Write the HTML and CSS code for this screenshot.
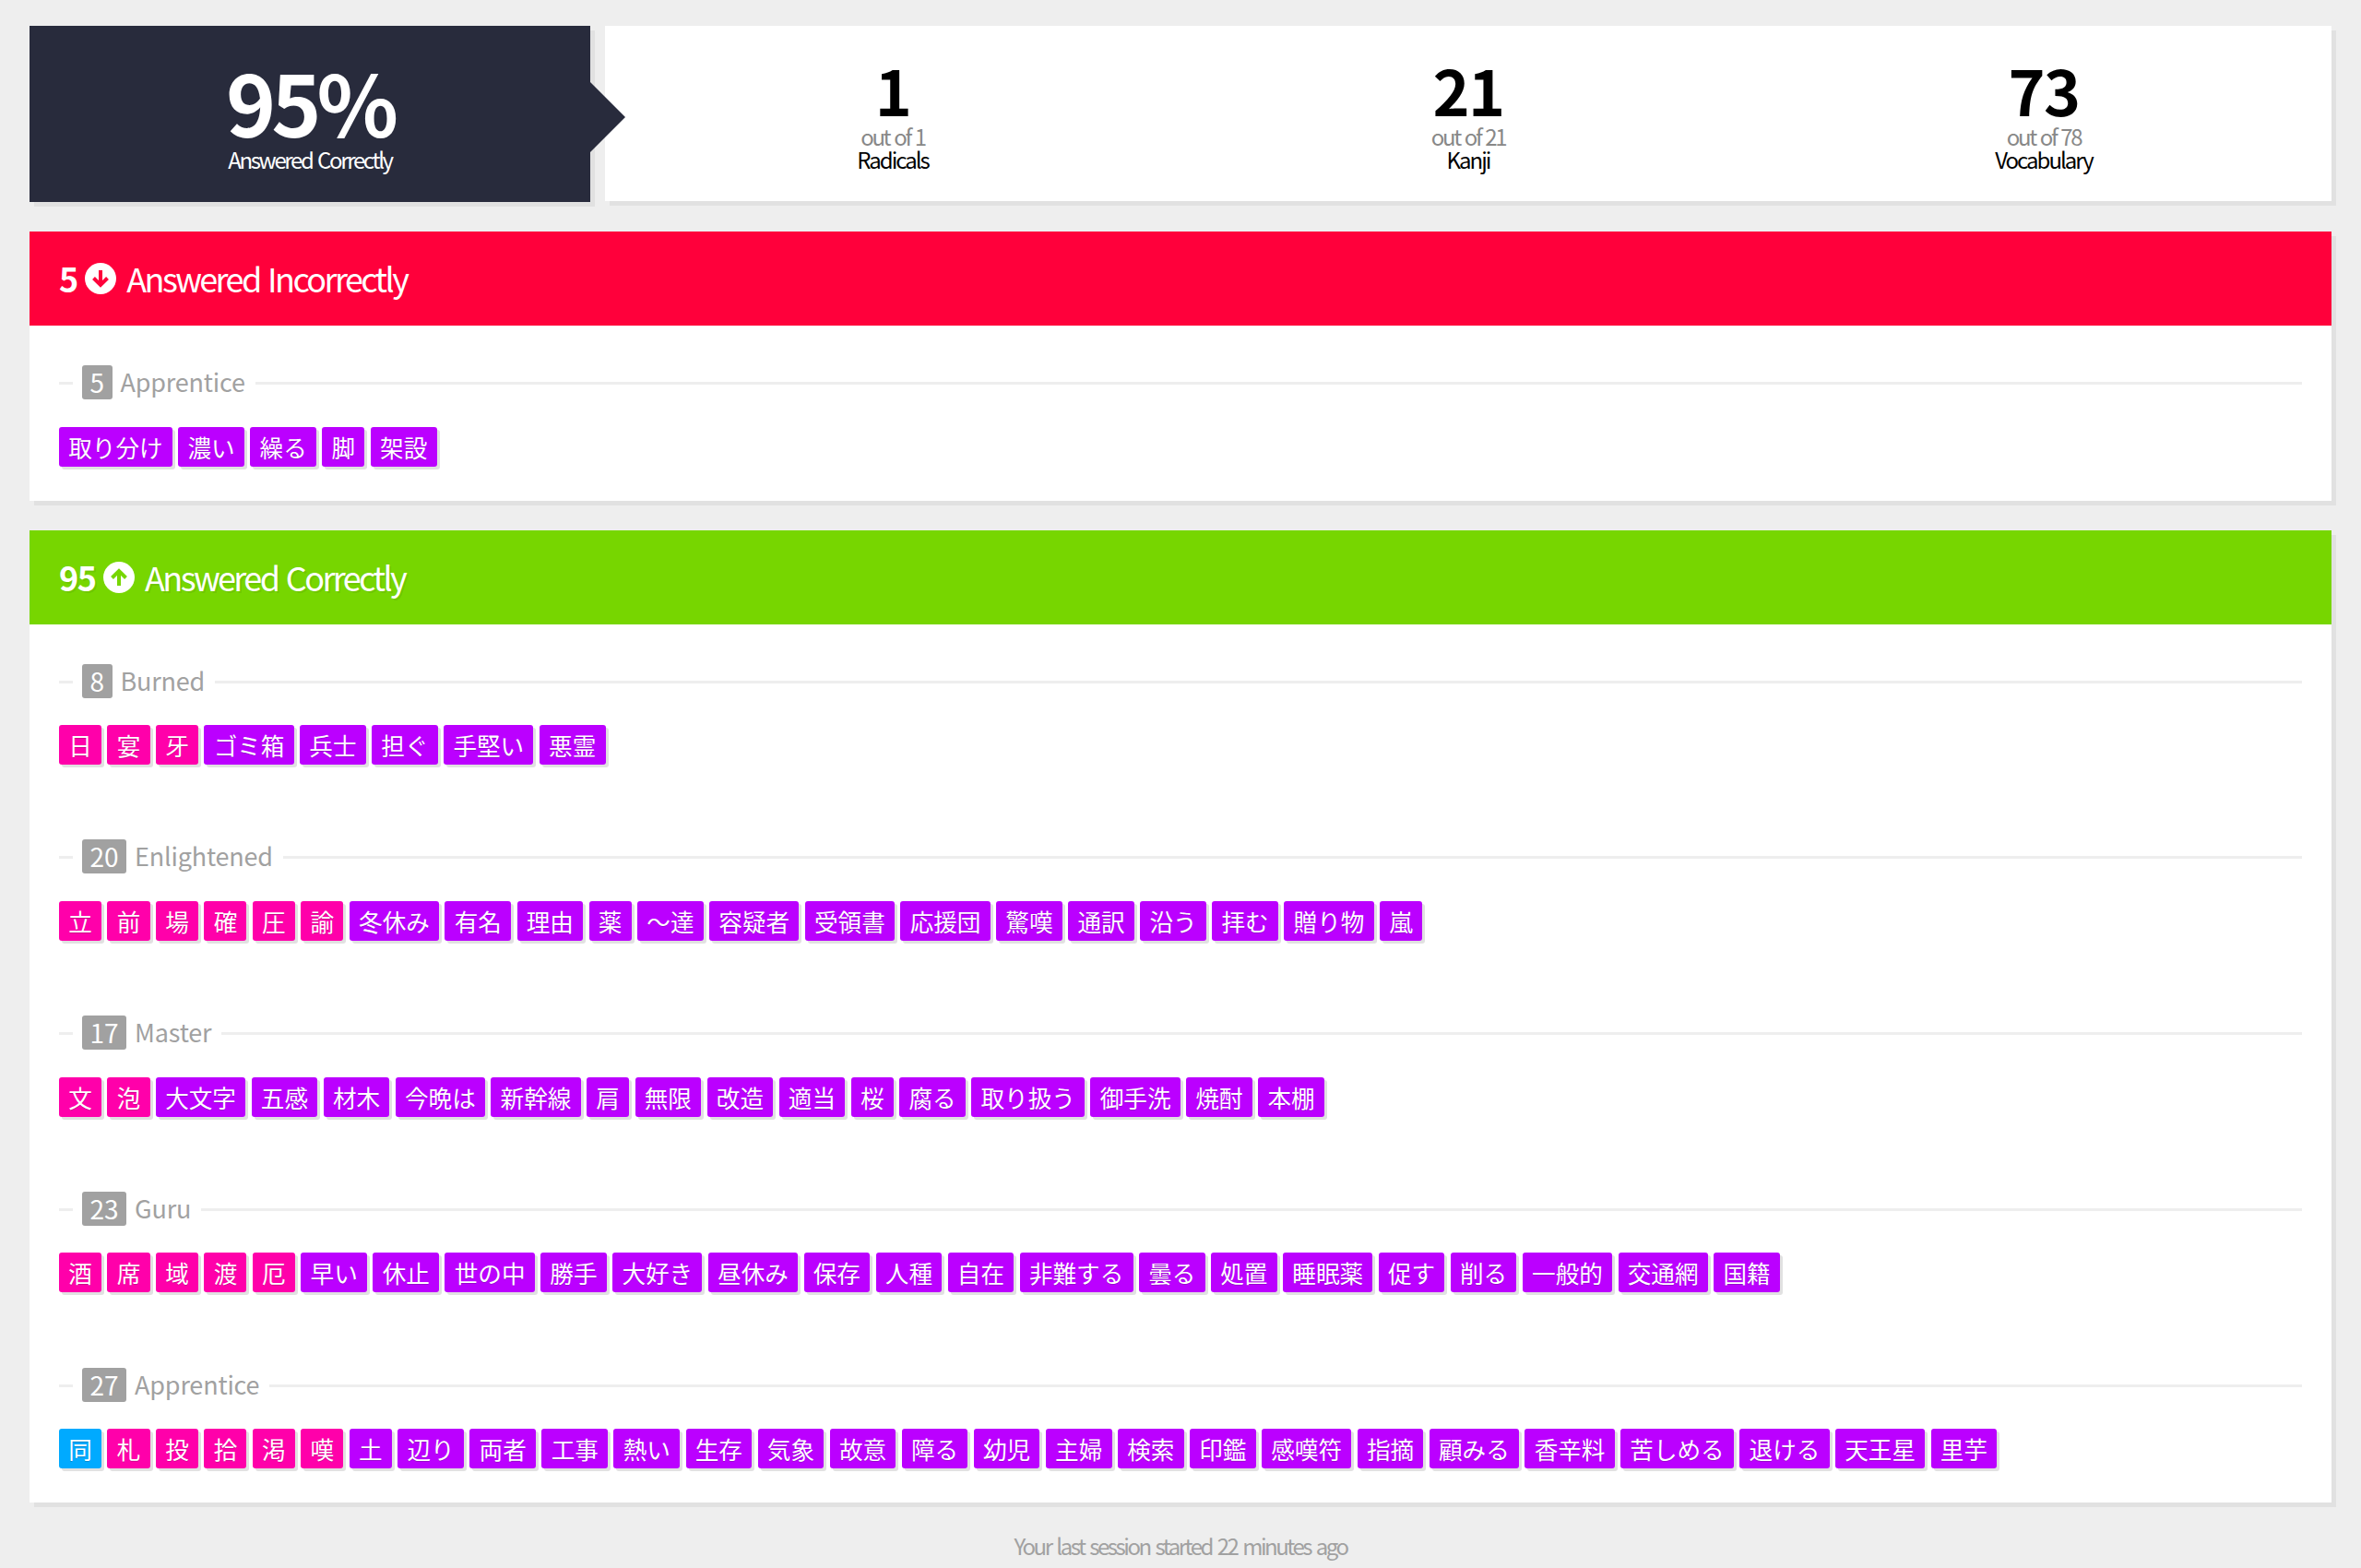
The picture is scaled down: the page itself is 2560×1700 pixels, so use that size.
FILE: index.html

```html
<!DOCTYPE html>
<html lang="ja">
<head>
  <meta charset="UTF-8" />
  <title>Review Summary</title>
  <link rel="stylesheet" href="styles.css">
</head>
<body>
  <div class="stats">
    <div class="score">
      <strong>95%</strong>
      <span>Answered Correctly</span>
    </div>
    <div class="counts">
      <div class="count"><strong>1</strong><small>out of 1</small><span>Radicals</span></div>
      <div class="count"><strong>21</strong><small>out of 21</small><span>Kanji</span></div>
      <div class="count"><strong>73</strong><small>out of 78</small><span>Vocabulary</span></div>
    </div>
  </div>

  <section class="panel">
    <h2 class="panel-head wrong">
      <b>5</b>
      <svg class="arrow" viewBox="0 0 34 34"><circle cx="17" cy="17" r="17" fill="#fff"/><path d="M17 8v16M9.5 16.5L17 24l7.5-7.5" fill="none" stroke="currentColor" stroke-width="4"/></svg>
      Answered Incorrectly
    </h2>
    <div class="panel-body">
      <div class="group last">
        <h3 class="group-head"><em>5</em><span>Apprentice</span></h3>
        <ul class="items">
          <li class="voc">取り分け</li><li class="voc">濃い</li><li class="voc">繰る</li><li class="voc">脚</li><li class="voc">架設</li>
        </ul>
      </div>
    </div>
  </section>

  <section class="panel">
    <h2 class="panel-head right">
      <b>95</b>
      <svg class="arrow" viewBox="0 0 34 34"><circle cx="17" cy="17" r="17" fill="#fff"/><path d="M17 26V10M9.5 17.5L17 10l7.5 7.5" fill="none" stroke="currentColor" stroke-width="4"/></svg>
      Answered Correctly
    </h2>
    <div class="panel-body">
      <div class="group">
        <h3 class="group-head"><em>8</em><span>Burned</span></h3>
        <ul class="items">
          <li class="kan">日</li><li class="kan">宴</li><li class="kan">牙</li><li class="voc">ゴミ箱</li><li class="voc">兵士</li><li class="voc">担ぐ</li><li class="voc">手堅い</li><li class="voc">悪霊</li>
        </ul>
      </div>
      <div class="group">
        <h3 class="group-head"><em>20</em><span>Enlightened</span></h3>
        <ul class="items">
          <li class="kan">立</li><li class="kan">前</li><li class="kan">場</li><li class="kan">確</li><li class="kan">圧</li><li class="kan">諭</li><li class="voc">冬休み</li><li class="voc">有名</li><li class="voc">理由</li><li class="voc">薬</li><li class="voc">～達</li><li class="voc">容疑者</li><li class="voc">受領書</li><li class="voc">応援団</li><li class="voc">驚嘆</li><li class="voc">通訳</li><li class="voc">沿う</li><li class="voc">拝む</li><li class="voc">贈り物</li><li class="voc">嵐</li>
        </ul>
      </div>
      <div class="group">
        <h3 class="group-head"><em>17</em><span>Master</span></h3>
        <ul class="items">
          <li class="kan">文</li><li class="kan">泡</li><li class="voc">大文字</li><li class="voc">五感</li><li class="voc">材木</li><li class="voc">今晩は</li><li class="voc">新幹線</li><li class="voc">肩</li><li class="voc">無限</li><li class="voc">改造</li><li class="voc">適当</li><li class="voc">桜</li><li class="voc">腐る</li><li class="voc">取り扱う</li><li class="voc">御手洗</li><li class="voc">焼酎</li><li class="voc">本棚</li>
        </ul>
      </div>
      <div class="group">
        <h3 class="group-head"><em>23</em><span>Guru</span></h3>
        <ul class="items">
          <li class="kan">酒</li><li class="kan">席</li><li class="kan">域</li><li class="kan">渡</li><li class="kan">厄</li><li class="voc">早い</li><li class="voc">休止</li><li class="voc">世の中</li><li class="voc">勝手</li><li class="voc">大好き</li><li class="voc">昼休み</li><li class="voc">保存</li><li class="voc">人種</li><li class="voc">自在</li><li class="voc">非難する</li><li class="voc">曇る</li><li class="voc">処置</li><li class="voc">睡眠薬</li><li class="voc">促す</li><li class="voc">削る</li><li class="voc">一般的</li><li class="voc">交通網</li><li class="voc">国籍</li>
        </ul>
      </div>
      <div class="group last">
        <h3 class="group-head"><em>27</em><span>Apprentice</span></h3>
        <ul class="items">
          <li class="rad">同</li><li class="kan">札</li><li class="kan">投</li><li class="kan">拾</li><li class="kan">渇</li><li class="kan">嘆</li><li class="voc">土</li><li class="voc">辺り</li><li class="voc">両者</li><li class="voc">工事</li><li class="voc">熱い</li><li class="voc">生存</li><li class="voc">気象</li><li class="voc">故意</li><li class="voc">障る</li><li class="voc">幼児</li><li class="voc">主婦</li><li class="voc">検索</li><li class="voc">印鑑</li><li class="voc">感嘆符</li><li class="voc">指摘</li><li class="voc">顧みる</li><li class="voc">香辛料</li><li class="voc">苦しめる</li><li class="voc">退ける</li><li class="voc">天王星</li><li class="voc">里芋</li>
        </ul>
      </div>
    </div>
  </section>

  <p class="foot">Your last session started 22 minutes ago</p>
</body>
</html>
```

FILE: styles.css

```css
* {
  box-sizing: border-box;
}
body {
  margin: 0;
  padding: 28px 32px 0;
  background-color: #eee;
  color: #000;
  font-family: "Noto Sans CJK JP", "Noto Sans", sans-serif;
}
.stats {
  display: flex;
  gap: 16px;
  margin-bottom: 32px;
}
.score {
  position: relative;
  flex: 0 0 608px;
  height: 191px;
  padding-top: 34px;
  background: #282b3c;
  color: #fff;
  text-align: center;
  box-shadow: 5px 5px 0 #e1e1e1;
}
.score::after {
  content: "";
  position: absolute;
  left: 100%;
  top: 61px;
  border-left: 38px solid #282b3c;
  border-top: 38px solid transparent;
  border-bottom: 38px solid transparent;
}
.score strong {
  display: block;
  font-size: 92px;
  font-weight: 700;
  line-height: 94px;
  letter-spacing: -5px;
}
.score span {
  display: block;
  margin-top: 2px;
  font-size: 24px;
  line-height: 30px;
  letter-spacing: -2.35px;
  word-spacing: 2.5px;
}
.counts {
  flex: 1;
  display: grid;
  grid-template-columns: repeat(3, 1fr);
  height: 190px;
  padding-top: 30px;
  background: #fff;
  box-shadow: 5px 5px 0 #e1e1e1;
  text-align: center;
}
.count strong {
  display: block;
  font-size: 68px;
  font-weight: 700;
  line-height: 78px;
  letter-spacing: -1.5px;
}
.count small {
  display: block;
  font-size: 24px;
  line-height: 24px;
  color: #888;
  letter-spacing: -2.4px;
  word-spacing: 2px;
}
.count span {
  display: block;
  font-size: 24px;
  line-height: 26px;
  letter-spacing: -2px;
}
.panel {
  margin-bottom: 32px;
  background: #fff;
  box-shadow: 5px 5px 0 #e1e1e1;
}
.panel-head {
  display: flex;
  align-items: center;
  height: 102px;
  margin: 0;
  padding: 0 32px 2px;
  color: #fff;
  font-size: 36px;
  font-weight: 400;
  letter-spacing: -2.6px;
  word-spacing: 3px;
}
.panel-head b {
  font-weight: 700;
  letter-spacing: -1.5px;
}
.panel-head.wrong {
  background: #ff003b;
  color: #fff;
}
.panel-head.right {
  background: #77d600;
  text-shadow: 2px 2px 0 rgba(0,0,0,0.08);
}
.arrow {
  width: 34px;
  height: 34px;
  margin: 2px 11px 0 8.5px;
}
.wrong .arrow {
  color: #ff003b;
}
.right .arrow {
  color: #77d600;
}
.panel-body {
  padding: 43px 32px 37px;
}
.group {
  margin-bottom: 81.25px;
}
.group.last {
  margin-bottom: 0;
}
.group-head {
  display: flex;
  align-items: center;
  height: 37px;
  margin: 0 0 29.5px;
  color: #a1a1a1;
  font-size: 27px;
  font-weight: 400;
  letter-spacing: -0.2px;
}
.group-head span {
  margin-bottom: 2px;
}
.group-head::before {
  content: "";
  flex: 0 0 15px;
  height: 3px;
  margin: 2px 10px 0 0;
  background: #eee;
}
.group-head::after {
  content: "";
  flex: 1;
  height: 3px;
  margin: 2px 0 0 11px;
  background: #eee;
}
.group-head em {
  margin-right: 9px;
  padding: 0 8.5px;
  border-radius: 3px;
  background: #a1a1a1;
  color: #fff;
  font-size: 28px;
  font-style: normal;
  line-height: 37px;
  letter-spacing: 0;
}
.items {
  display: flex;
  flex-wrap: wrap;
  gap: 6.4px;
  margin: 0;
  padding: 0;
  list-style: none;
}
.items li {
  padding: 0 10.24px;
  height: 43px;
  border-radius: 3px;
  color: #fff;
  font-size: 25.6px;
  line-height: 44px;
  box-shadow: 3px 3px 0 #e1e1e1;
  text-shadow: 0 1px 0 rgba(0,0,0,0.2);
}
.rad {
  background: #00aaff;
}
.kan {
  background: #ff00aa;
}
.voc {
  background: #bb00ff;
}
.foot {
  margin: 0;
  padding: 0 0 4px;
  color: #a1a1a1;
  font-size: 24px;
  line-height: 29px;
  text-align: center;
  letter-spacing: -2.5px;
  word-spacing: 3px;
}
```
